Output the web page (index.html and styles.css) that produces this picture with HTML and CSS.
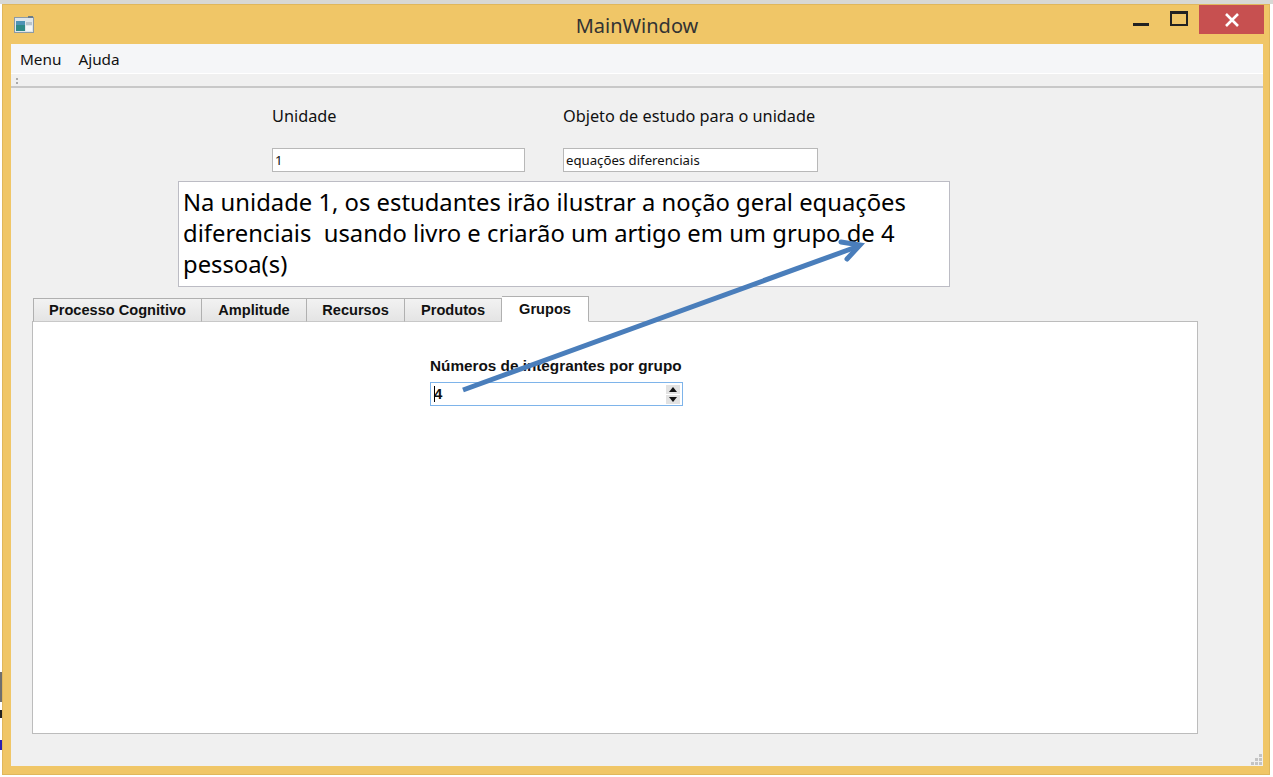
FILE: index.html
```html
<!DOCTYPE html>
<html lang="pt">
<head>
    <meta charset="UTF-8">
    <title>MainWindow</title>
    <link rel="stylesheet" href="styles.css">
</head>
<body>
    <div class="window">
        <div class="titlebar">
            <svg class="app-icon" width="20" height="17" viewBox="0 0 20 17">
                <rect x="0.5" y="1.5" width="19" height="15" fill="#dfe6ea" stroke="#8b9aa6"/>
                <rect x="2" y="5" width="9" height="10" fill="#2f8a86"/>
                <rect x="2" y="5" width="9" height="4" fill="#4d93b5"/>
                <rect x="12" y="6" width="6" height="3" fill="#b9c4cb"/>
                <rect x="12" y="10" width="6" height="5" fill="#f4f6f7"/>
                <rect x="14" y="0" width="5" height="2" fill="#6c7c88"/>
            </svg>
            <div class="title">MainWindow</div>
            <div class="min-btn"></div>
            <div class="max-btn"></div>
            <div class="close-btn">
                <svg width="16" height="14" viewBox="0 0 16 14">
                    <path d="M2 1 L14 13 M14 1 L2 13" stroke="#fff" stroke-width="2.6" fill="none"/>
                </svg>
            </div>
        </div>
        <div class="client">
            <div class="menubar">
                <span class="menu-item">Menu</span>
                <span class="menu-item">Ajuda</span>
            </div>
            <div class="toolbar"><span class="grip"></span></div>
            <div class="content">
                <div class="form-row">
                    <div class="field field-unit">
                        <label>Unidade</label>
                        <div class="line-edit">1</div>
                    </div>
                    <div class="field field-topic">
                        <label>Objeto de estudo para o unidade</label>
                        <div class="line-edit">equações diferenciais</div>
                    </div>
                </div>
                <div class="summary">Na unidade 1, os estudantes irão ilustrar a noção geral equações
diferenciais  usando livro e criarão um artigo em um grupo de 4
pessoa(s)</div>
                <div class="tabs">
                    <div class="tab tab-1">Processo Cognitivo</div>
                    <div class="tab tab-2">Amplitude</div>
                    <div class="tab tab-3">Recursos</div>
                    <div class="tab tab-4">Produtos</div>
                    <div class="tab tab-active">Grupos</div>
                </div>
                <div class="panel">
                    <div class="group-label">Números de integrantes por grupo</div>
                    <div class="spinbox">
                        <span class="caret"></span><span class="spin-value">4</span>
                        <div class="spin-btns">
                            <span class="spin-up"></span>
                            <span class="spin-down"></span>
                        </div>
                    </div>
                </div>
                <div class="size-grip">
                    <svg width="11" height="11" viewBox="0 0 11 11" fill="#c4c4c4">
                        <rect x="8" y="0" width="3" height="3"/>
                        <rect x="4" y="4" width="3" height="3"/>
                        <rect x="8" y="4" width="3" height="3"/>
                        <rect x="0" y="8" width="3" height="3"/>
                        <rect x="4" y="8" width="3" height="3"/>
                        <rect x="8" y="8" width="3" height="3"/>
                    </svg>
                </div>
            </div>
        </div>
    </div>

    <!-- arrow drawn over the screenshot -->
    <svg class="arrow" width="1273" height="777" viewBox="0 0 1273 777">
        <path d="M463 390 L859 246" stroke="#4a7ebb" stroke-width="5" fill="none"/>
        <path d="M841 242 L860 245 L847 259" stroke="#4a7ebb" stroke-width="5" stroke-linecap="round" stroke-linejoin="miter" fill="none"/>
    </svg>
</body>
</html>
```

FILE: styles.css
```css
/* Page */
html, body {
    margin: 0;
    height: 777px;
    overflow: hidden;
}

body {
    position: relative;
    box-sizing: border-box;
    padding: 4px 3px 2px 2px;
    font-family: "Noto Sans", sans-serif;
    color: #111;
    background-color: #fff;
    background-image:
        linear-gradient(#d8d8d4, #d8d8d4),
        linear-gradient(#6e6e6e, #6e6e6e),
        linear-gradient(#222, #222),
        linear-gradient(#2a1fb0, #2a1fb0);
    background-repeat: no-repeat;
    background-size: 100% 4px, 2px 30px, 2px 8px, 2px 10px;
    background-position: 0 0, 0 672px, 0 710px, 0 740px;
}

/* Window frame */
.window {
    height: 771px;
    box-sizing: border-box;
    display: flex;
    flex-direction: column;
    background: #f0c667;
    border: 1px solid #e0b75c;
    padding: 0 6px 8px 8px;
}

.titlebar {
    position: relative;
    height: 39px;
    flex: none;
    display: flex;
    justify-content: center;
}

.app-icon {
    position: absolute;
    left: 3px;
    top: 11px;
}

.title {
    margin: 8px 0 0 0;
    font-size: 20px;
    line-height: 26px;
    color: #333;
}

.min-btn {
    position: absolute;
    left: 1122px;
    top: 18px;
    width: 16px;
    height: 3px;
    background: #222;
}

.max-btn {
    position: absolute;
    left: 1159px;
    top: 6px;
    width: 14px;
    height: 10px;
    border: 2px solid #222;
    border-top-width: 3px;
}

.close-btn {
    position: absolute;
    left: 1188px;
    top: 0;
    width: 65px;
    height: 29px;
    background: #c75050;
    display: flex;
    align-items: center;
    justify-content: center;
}

/* Client area */
.client {
    flex: 1;
    display: flex;
    flex-direction: column;
    background: #f0f0f0;
}

.menubar {
    height: 29px;
    flex: none;
    display: flex;
    align-items: center;
    gap: 17px;
    padding-left: 9px;
    background: #f5f6f8;
    font-size: 15.3px;
}

.toolbar {
    height: 13px;
    flex: none;
    box-sizing: border-box;
    border-top: 1px solid #fff;
    background: #f0f0f0;
    position: relative;
}

.grip {
    position: absolute;
    left: 5px;
    top: 4px;
    width: 2px;
    height: 6px;
    background: repeating-linear-gradient(#aaa 0 2px, transparent 2px 4px);
}

.content {
    flex: 1;
    position: relative;
    border-top: 2px solid #c8c8c8;
    padding: 0 65px 0 21px;
}

/* Top form */
.form-row {
    display: flex;
    padding-left: 240px;
    gap: 38px;
    height: 93px;
}

.field label {
    display: block;
    margin-top: 17px;
    font-size: 16.3px;
    line-height: 22px;
    white-space: nowrap;
}

.field-unit { width: 253px; }
.field-topic { width: 255px; }

.line-edit {
    margin-top: 21px;
    height: 24px;
    box-sizing: border-box;
    border: 1px solid #b8b8b8;
    background: #fff;
    padding-left: 2px;
    font-size: 13.2px;
    line-height: 23px;
}

.summary {
    margin-left: 146px;
    width: 772px;
    height: 106px;
    box-sizing: border-box;
    border: 1px solid #bcbcc4;
    background: #fff;
    padding: 5px 4px;
    white-space: pre-wrap;
    font-size: 23.8px;
    line-height: 31px;
    color: #000;
}

/* Tabs */
.tabs {
    display: flex;
    align-items: flex-end;
    margin-top: 8px;
    height: 26px;
    font-family: "Liberation Sans", sans-serif;
    font-size: 14.6px;
    font-weight: bold;
    position: relative;
    z-index: 1;
}

.tab {
    box-sizing: border-box;
    height: 24px;
    margin-bottom: -1px;
    border: 1px solid #b0b0b0;
    border-left-width: 0;
    border-bottom-color: #c8c8c8;
    background: linear-gradient(#f2f2f2, #e4e4e4);
    text-align: center;
    line-height: 23px;
}

.tab-1 { width: 169px; margin-left: 1px; border-left-width: 1px; }
.tab-2 { width: 105px; }
.tab-3 { width: 98px; }
.tab-4 { width: 97px; }

.tab-active {
    width: 87px;
    height: 26px;
    background: #fff;
    border-bottom-color: #fff;
    line-height: 25px;
}

.panel {
    height: 413px;
    width: 1166px;
    box-sizing: border-box;
    border: 1px solid #bcbcbc;
    background: #fff;
    padding: 34px 0 0 397px;
}

.group-label {
    font-family: "Liberation Sans", sans-serif;
    font-size: 15.3px;
    font-weight: bold;
    line-height: 20px;
    white-space: nowrap;
}

.spinbox {
    margin-top: 6px;
    width: 253px;
    height: 24px;
    box-sizing: border-box;
    border: 1px solid #7eb4ea;
    display: flex;
    align-items: center;
    padding: 0 0 0 3px;
    font-family: "Liberation Sans", sans-serif;
    font-size: 15px;
    font-weight: bold;
}

.caret {
    width: 1px;
    height: 16px;
    background: #000;
}

.spin-value {
    margin-left: -1px;
    flex: 1;
    line-height: 20px;
}

.spin-btns {
    display: flex;
    flex-direction: column;
    gap: 1px;
    margin-right: 2px;
}

.spin-up, .spin-down {
    width: 14px;
    height: 9px;
    background: #e2e2e2;
    position: relative;
}

.spin-up::after, .spin-down::after {
    content: "";
    position: absolute;
    left: 3px;
    border-left: 4px solid transparent;
    border-right: 4px solid transparent;
}

.spin-up::after { top: 2px; border-bottom: 5px solid #111; }
.spin-down::after { top: 2px; border-top: 5px solid #111; }

.size-grip {
    position: absolute;
    right: 1px;
    bottom: 1px;
    line-height: 0;
}

/* Arrow annotation */
.arrow {
    position: absolute;
    left: 0;
    top: 0;
}
```
